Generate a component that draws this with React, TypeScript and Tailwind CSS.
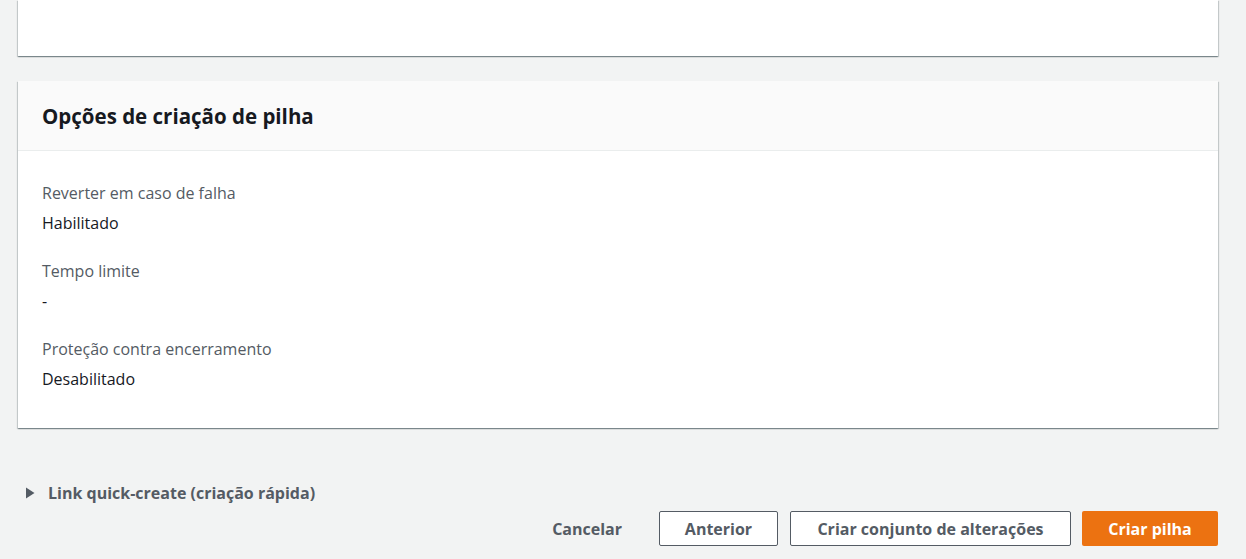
import React from "react";

const shadow =
  "shadow-[0_1px_1px_0_rgba(0,28,36,0.3),1px_1px_1px_0_rgba(0,28,36,0.15),-1px_1px_1px_0_rgba(0,28,36,0.15)]";

function Field({ label, value }: { label: string; value: string }) {
  return (
    <div className="flex flex-col">
      <div className="text-[16px] leading-[22px] text-[#545b64]">{label}</div>
      <div className="mt-[8px] text-[16px] leading-[22px] text-[#16191f]">{value}</div>
    </div>
  );
}

export default function App() {
  return (
    <div
      className="w-[1246px] h-[559px] overflow-hidden bg-[#f2f3f3]"
      style={{ fontFamily: '"Open Sans", "Noto Sans", Arial, sans-serif' }}
    >
      <div className="w-[1200px] ml-[18px]">
        <div className={`h-[56px] bg-white ${shadow}`}></div>

        <div className={`mt-[25px] bg-white ${shadow}`}>
          <div className="h-[70px] bg-[#fafafa] border-b border-[#eaeded] px-[24px] flex items-center">
            <h2 className="text-[20.5px] font-bold text-[#16191f] leading-[26px]">
              Opções de criação de pilha
            </h2>
          </div>
          <div className="px-[24px] pt-[31px] pb-[38px] flex flex-col gap-[26px]">
            <Field label="Reverter em caso de falha" value="Habilitado" />
            <Field label="Tempo limite" value="-" />
            <Field label="Proteção contra encerramento" value="Desabilitado" />
          </div>
        </div>

        <div className="mt-[54px] flex items-center gap-[13px] pl-[8px] text-[#545b64]">
          <svg width="9" height="12" viewBox="0 0 9 12">
            <path d="M0 0.5 L8.5 6 L0 11.5 Z" fill="#545b64" />
          </svg>
          <span className="text-[16px] font-bold leading-[22px]">Link quick-create (criação rápida)</span>
        </div>

        <div className="mt-[7px] flex justify-end items-center">
          <button className="h-[35px] px-[20px] text-[16px] font-bold text-[#545b64] mr-[17px]">
            Cancelar
          </button>
          <button className="h-[35px] w-[119px] border border-[#545b64] rounded-[2px] bg-white text-[16px] font-bold text-[#545b64] mr-[12px]">
            Anterior
          </button>
          <button className="h-[35px] w-[281px] border border-[#545b64] rounded-[2px] bg-white text-[16px] font-bold text-[#545b64] mr-[11px]">
            Criar conjunto de alterações
          </button>
          <button className="h-[35px] w-[136px] rounded-[2px] bg-[#ec7211] text-[16px] font-bold text-white">
            Criar pilha
          </button>
        </div>
      </div>
    </div>
  );
}
